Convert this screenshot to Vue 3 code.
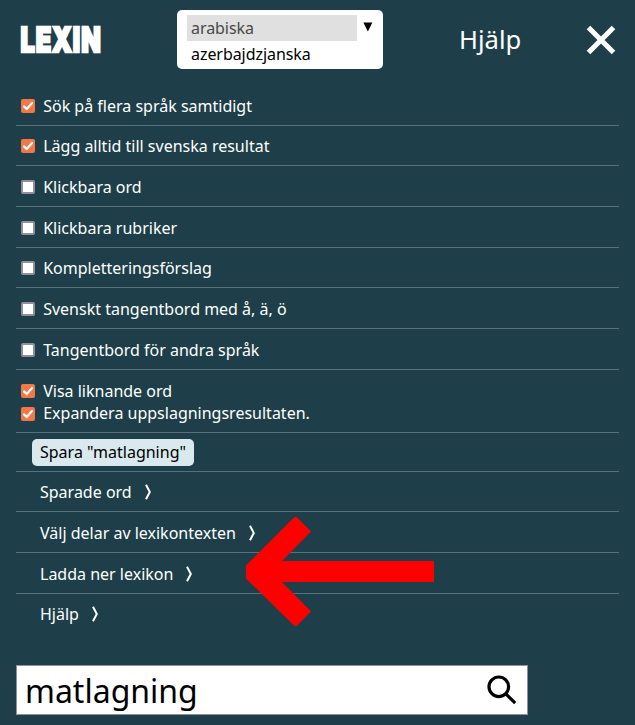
<script setup>
import { ref } from 'vue'

const options = ref([
  [{ label: 'Sök på flera språk samtidigt', on: true }],
  [{ label: 'Lägg alltid till svenska resultat', on: true }],
  [{ label: 'Klickbara ord', on: false }],
  [{ label: 'Klickbara rubriker', on: false }],
  [{ label: 'Kompletteringsförslag', on: false }],
  [{ label: 'Svenskt tangentbord med å, ä, ö', on: false }],
  [{ label: 'Tangentbord för andra språk', on: false }],
  [
    { label: 'Visa liknande ord', on: true },
    { label: 'Expandera uppslagningsresultaten.', on: true },
  ],
])
const links = ['Sparade ord', 'Välj delar av lexikontexten', 'Ladda ner lexikon', 'Hjälp']
const query = ref('matlagning')
</script>

<template>
  <div class="page">
    <header class="top">
      <svg class="logo" width="84" height="32" viewBox="0 0 84 32" aria-label="LEXIN">
        <text class="logo-text" x="2.5" y="27.7" textLength="81" lengthAdjust="spacingAndGlyphs">LEXIN</text>
      </svg>
      <div class="languages">
        <ul>
          <li class="chosen">arabiska</li>
          <li>azerbajdzjanska</li>
        </ul>
        <svg class="caret" width="10" height="10" viewBox="0 0 10 10"><path d="M0.4 0.5H9.4L4.9 9.6Z" /></svg>
      </div>
      <a class="help">Hjälp</a>
      <svg class="close" width="28" height="28" viewBox="0 0 28 28"><path d="M1.5 1.5L26.5 26.5M26.5 1.5L1.5 26.5" /></svg>
    </header>

    <main class="settings">
      <section v-for="(group, i) in options" :key="i" class="row">
        <label v-for="item in group" :key="item.label" class="option">
          <span class="box" :class="{ on: item.on }" @click="item.on = !item.on">
            <svg v-if="item.on" width="14" height="14" viewBox="0 0 14 14"><path d="M3 7.4L5.7 10L11.1 4" /></svg>
          </span>
          <span>{{ item.label }}</span>
        </label>
      </section>
      <section class="row save-row"><button class="save">Spara "{{ query }}"</button></section>
      <section v-for="link in links" :key="link" class="row link">
        <span>{{ link }}</span>
        <svg width="7" height="16" viewBox="0 0 7 16"><path d="M1 0.8L4.8 8L1 15.2" /></svg>
      </section>
    </main>

    <div class="search">
      <span>{{ query }}</span>
      <svg width="30" height="30" viewBox="0 0 30 30"><circle cx="11.8" cy="11.8" r="9.8" /><path d="M18.6 18.6L28.2 28.2" /></svg>
    </div>

    <svg class="pointer" width="188" height="110" viewBox="0 0 188 110">
      <path d="M0 48.5L48.5 0H50.5L65 14.5L36 44H188V65H36L65 94.5L50.5 109H48.5L0 61.5Z" />
    </svg>
  </div>
</template>

<style>
body { background: #1e3f49; }
</style>

<style scoped>
.page {
  position: relative;
  box-sizing: border-box;
  width: 635px;
  height: 725px;
  padding: 10px 16px 0;
  overflow: hidden;
  background: #1e3f49;
  color: #fff;
  font: 16px/22px "Noto Sans", sans-serif;
}
.top { display: flex; align-items: flex-start; height: 75px; }
.logo { margin: 14px 0 0 2px; overflow: visible; }
.logo-text { fill: #fff; stroke: #fff; stroke-width: 2.4; letter-spacing: 1.2px; font: 900 34px Inter, sans-serif; }
.languages {
  box-sizing: border-box;
  display: flex;
  width: 206px;
  height: 59px;
  margin-left: 75px;
  padding: 5px 10px 0;
  border-radius: 5px;
  background: #fff;
  color: #000;
}
ul { width: 170px; margin: 0; padding: 0; list-style: none; }
li { height: 26px; padding-left: 4px; line-height: 26px; letter-spacing: -0.06px; }
.chosen { background: #e0e0e0; color: #484848; }
.caret { margin: 7px 0 0 6px; }
.help { margin: 12px 0 0 76px; font-size: 25.6px; line-height: 35px; }
.close { margin: 16px 4px 0 auto; fill: none; stroke: #fff; stroke-width: 5; overflow: visible; }
.settings {
  display: grid;
  grid-template-rows: 41px 40px 41px 41px 40px 41px 41px 63px 39px 40px 41px 41px 40px;
}
.row {
  display: flex;
  flex-direction: column;
  justify-content: flex-end;
  padding-bottom: 8px;
  border-bottom: 1px solid #587079;
}
.row:last-child { border-color: transparent; }
.option { display: flex; align-items: center; gap: 8.2px; padding-left: 5px; }
.box {
  box-sizing: border-box;
  display: flex;
  width: 14px;
  height: 14px;
  border: 2px solid #8f8f9d;
  border-radius: 2px;
  background: #fff;
}
.option + .option .box { margin-top: 2px; }
.box.on { border: 0; background: #f17848; }
.box path { fill: none; stroke: #fff; stroke-width: 2.2; stroke-linecap: round; stroke-linejoin: round; }
.save-row { align-items: flex-start; padding: 0 0 5px 16px; }
.save {
  height: 27px;
  padding: 0 8px 2px;
  border: 0;
  border-radius: 5px;
  background: #d9e9ed;
  color: #000;
  font: inherit;
}
.link { flex-direction: row; align-items: flex-end; justify-content: flex-start; gap: 13px; padding-left: 24px; }
.link svg { margin-bottom: 3px; fill: none; stroke: #fff; stroke-width: 2; }
.search {
  box-sizing: border-box;
  display: flex;
  align-items: center;
  justify-content: space-between;
  width: 512px;
  height: 50px;
  margin-top: 31px;
  padding: 0 10px 0 8px;
  border: 1px solid #8f8f9d;
  background: #fff;
  color: #000;
  font-size: 32px;
  line-height: 48px;
}
.search span { padding-top: 2px; }
.search svg { fill: none; stroke: #000; stroke-width: 3.2; }
.pointer { position: absolute; left: 246px; top: 517px; fill: #f00; }
</style>
